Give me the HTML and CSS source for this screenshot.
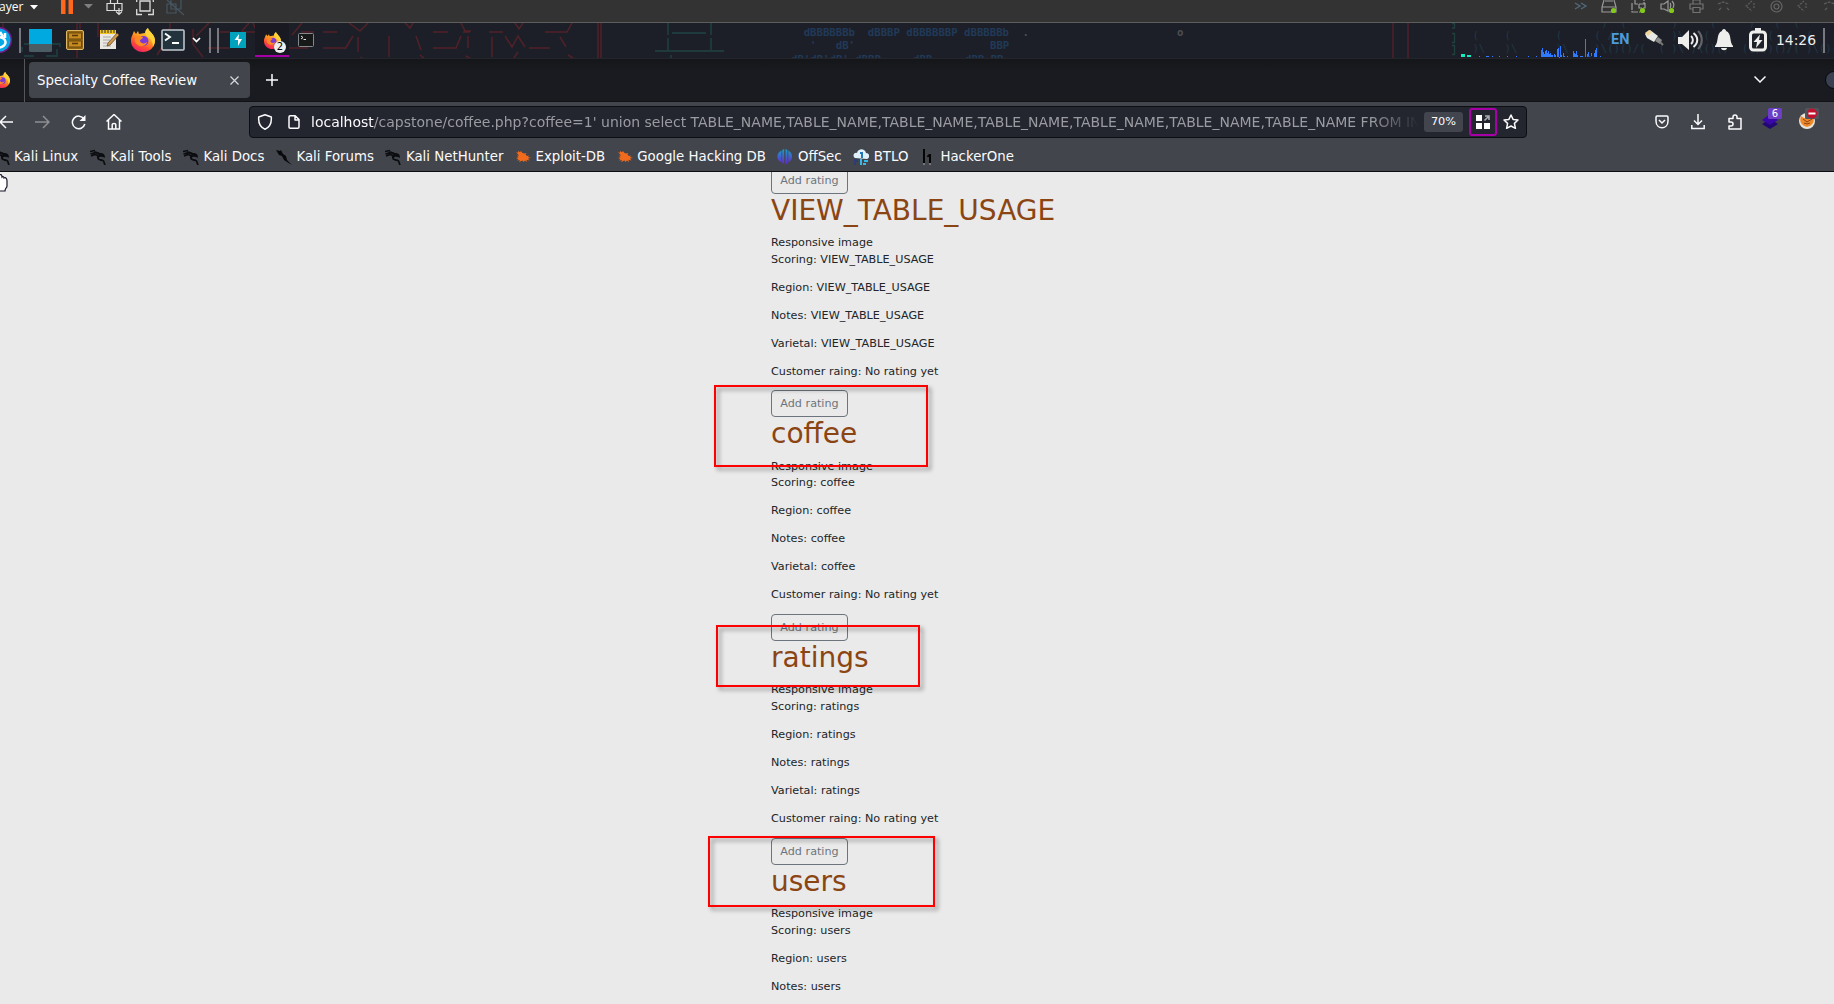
FILE: index.html
```html
<!DOCTYPE html>
<html lang="en">
<head>
<meta charset="utf-8">
<title>Specialty Coffee Review</title>
<link rel="stylesheet" href="styles.css">
</head>
<body>
<svg class="defs" width="0" height="0" aria-hidden="true">
  <defs>
    <linearGradient id="fire" x1="0.8" y1="0" x2="0.3" y2="1"><stop offset="0" stop-color="#ffe14a"/><stop offset=".45" stop-color="#ff9a1f"/><stop offset=".75" stop-color="#ff4a38"/><stop offset="1" stop-color="#f0206a"/></linearGradient>
    <linearGradient id="sec" gradientUnits="userSpaceOnUse" x1="0" y1="0" x2="0" y2="16"><stop offset="0" stop-color="#16a0c8"/><stop offset="1" stop-color="#6c1fd0"/></linearGradient>
    <symbol id="fox" viewBox="0 0 24 24"><path fill="url(#fire)" d="M1 8 3 3l2 3 2-3 1 3 6-1c0-2 1-4 3-5 0 3 6 5 7 12 0 7-5 12-12 12S0 19 0 13c0-2 0-3 1-5z"/><path fill="#ffd23a" d="M17 0c0 3 6 5 7 12 0 3-1 5-2 7 0-5-2-8-5-10-2-1-3-3-2-6z"/><circle cx="12.500" cy="13" r="5" fill="#7a3ad8"/><path fill="#ff8a24" d="M4 8c3-1 5 1 8 1 0 2-3 2-3 4 1 3 5 3 7 1-1 5-9 6-12 0z"/></symbol>
    <symbol id="dragon" viewBox="0 0 16 16"><path fill="none" stroke="#0c0d10" stroke-width="1.700" d="M0 2.500 5 1.500M.5 5 6 3.500 10 5M1 7 5 5.500 8 6.500c3-3 6-1 6 1-2-1-6-1-6 1.500s4 1 5.500 3L15 16M8 6.500C7 9 9 11 11.500 11.500"/><path fill="#0c0d10" d="m4 2 6 2 5 3-4-1-5-1.500z"/></symbol>
    <symbol id="bug" viewBox="0 0 16 14"><path fill="#f26a1b" d="m1 2 2 .8L3 1l2 1.300L6 1l1.500 2 2 .5 2-.5-1 1.500L12 6l2-.5L13 7l3 1-3 .5 1.500 2-3-.8.500 2.300-2-1.500-1.500 1.500-1-1.500L4 12l1-2-3 .5L3.500 9 1 8l2.500-.7L2 5.500h2z"/></symbol>
  </defs>
</svg>

<header class="vmbar">
  <span class="vm-label">ayer</span>
  <svg class="i-caret" width="8" height="5"><path d="M0 0h8L4 4.500z" fill="#fff"/></svg>
  <span class="vm-sep"></span>
  <svg class="i-pause" width="12" height="14"><path d="M0 0h4.500v14H0zM7.500 0H12v14H7.500z" fill="#ff671d"/></svg>
  <svg class="i-caret2" width="9" height="5"><path d="M0 0h9L4.500 4.500z" fill="#808080"/></svg>
  <svg class="i-send" width="19" height="22" fill="none" stroke="#dcdcdc" stroke-width="1.200"><path d="M4.500 0v3.500h7V0M1 3.500h15v7H1zM8.500 3.500v7M13 8v6M10 11.500l3 3 3-3"/></svg>
  <svg class="i-full" width="18" height="22" fill="none" stroke="#dcdcdc" stroke-width="1.300"><path d="M4 1h10v10H4zM.7 9v5.500H6M12 14.500h5.300V9M.7 0v2M17.300 0v2"/></svg>
  <svg class="i-unity" width="19" height="22" fill="none" stroke="#465663" stroke-width="1.200"><path d="M5 0v9h10V0M1 4h9v9H1zM1 0l17 15"/></svg>
  <div class="vm-devices">
    <svg width="14" height="22" fill="none" stroke="#53697b" stroke-width="1.300"><path d="m1 3 5 3-5 3M7 3l5 3-5 3"/></svg>
    <svg width="17" height="22" fill="none" stroke="#9a9a9a" stroke-width="1.200"><path d="m3 0-2 7v5h14V7l-2-7M1 7h14M4 1h8"/><circle cx="12.500" cy="10.500" r="2.600" fill="#83c91c" stroke="none"/></svg>
    <svg width="17" height="22" fill="none" stroke="#9a9a9a" stroke-width="1.200"><path d="M4 0v4h9V0M8 4v4h6V3M1 3v9h8" stroke-dasharray="7 1"/><circle cx="11.500" cy="10.500" r="2.600" fill="#83c91c" stroke="none"/></svg>
    <svg width="16" height="22" fill="none" stroke="#9a9a9a" stroke-width="1.200"><path d="M1 4h3l4-3v10L4 9H1zM10 3c1 1 1 4 0 5M12 1c2 2 2 5 1 7"/><circle cx="11.500" cy="10.500" r="2.600" fill="#83c91c" stroke="none"/></svg>
    <svg width="15" height="22" fill="none" stroke="#737373" stroke-width="1.200"><path d="M4 4V0h7v4M4 9H1V4h13v5h-3M4 7.500h7v5H4z"/></svg>
    <svg width="14" height="22" fill="none" stroke="#5f5f5f" stroke-width="1.200"><path d="m1 4 5-2 6 2M2 10l3-3M12 10 9 7" stroke-dasharray="3 1"/></svg>
    <svg width="14" height="22" fill="none" stroke="#5f5f5f" stroke-width="1.200"><path d="m8 1-6 5 6 5M10 3v6" stroke-dasharray="2 1"/></svg>
    <svg width="13" height="22" fill="none" stroke="#666" stroke-width="1.200"><circle cx="6.500" cy="6.500" r="5.500"/><circle cx="6.500" cy="6.500" r="2.500"/></svg>
    <svg width="14" height="22" fill="none" stroke="#5f5f5f" stroke-width="1.200"><path d="m8 1-6 5 6 5M10 3v6" stroke-dasharray="2 1"/></svg>
    <svg width="14" height="22" fill="none" stroke="#5f5f5f" stroke-width="1.200"><path d="m1 4 5-2 6 2M2 10l3-3" stroke-dasharray="3 1"/></svg>
  </div>
</header>

<div class="panel">
  <svg class="wallpaper" width="1834" height="35" aria-hidden="true">
    <g fill="none" stroke="#512128" stroke-width="1.500">
      <path d="M3 0v5M77 0v35M80 0v6M98 0v14M170 0v5l-8 9M162 24l-5 8M193 6v15l10 13M209 0l-13 13M220 9h10M208 25h22M241 9h18M249 0l-7 8M253 0l10 22M270 12v22M283 25h25M302 0l-10 12M301 9h13M323 9h14M323 25h22M345 26l8-13M349 0l11 8 8-8M358 14v15M362 34l-5 4M389 13v21M405 0l5 5 3-5M416 13l5 14M420 32l4 3M433 9h15M433 25h22M463 9h7M440 9h8M440 25h16l5-12M461 0l4 8h6M468 13v12M489 9h14M492 14v20M515 0l4 6 4-6M505 13l7 11 6-11 7 11M529 25h21M545 9h22l5-9M560 14l6 10M466 33l5 3M518 29l-4 6M568 32l5 3M598 0v35M601 0v35M1393 0v35M1408 0v35"/>
    </g>
    <g fill="none" stroke="#1f3a3c" stroke-width="1.800"><path d="M24 21h12M46 21h14v3M22 24v5M24 33h10M57 26v7H46M668 0v12M711 0v12M672 10h34M668 15v12M711 15v12M655 28h69M671 32v3"/></g>
    <g class="ascii blue">
      <text x="803.700" y="13">dBBBBBBb  dBBBP dBBBBBBP dBBBBBb</text>
      <text x="803.700" y="26"> '   dB'</text><text x="990" y="26">BBP</text>
      <text x="791" y="40">dB'dB'dB' dBBP</text><text x="913" y="40">dBP</text><text x="965" y="40">dBP BB</text>
    </g>
    <g class="ascii grey"><text x="1022.400" y="13">.</text><text x="1177" y="13">o</text></g>
    <g fill="none" stroke="#1f403c" stroke-width="1.300"><path d="M1452 .500h2.500V5H1452M1452 10.500h2.500v9H1452M1452 22.500h2.500v9H1452"/></g>
    <g class="ascii teal">
      <text x="1466" y="16"> (    (       (     ( /((   (   )\   (      ( /(     (   (  ( /( </text>
      <text x="1466" y="29"> )\   )\      )\    )\()()/(  ( )\ )\()()  (()()()/( )\()()/()\()</text>
      <text x="1601" y="4">)  (       )     (     )   (  (        )  )</text>
    </g>
    <path fill="#14ebc2" d="M1461 31h4v3h-4zM1467 32h4v2h-4z"/>
    <path fill="#2e7bff" d="M1479 33h1v1h-1zM1486 33h3v1h-3zM1492 33h1v1h-1zM1499 33h1v1h-1zM1507 33h1v1h-1zM1516 33h1v1h-1zM1528 33h1v1h-1zM1536 33h1v1h-1zM1541 34v-7h1v-2h1v4h1v2h1v-3h1v-1h1v3h1v-2h1v3h1v-1h1v2h2v2h1v-3h1v1h1v2h1v-8h1v-1h1v10h1v-12h1v9h1v2h1v-4h1v3h1v1h2v-1h1v1zM1573 34v-6h1v2h1v1h1v-3h1v4h1v2zM1580 33h3v1h-3zM1585 34V16h1v18zM1587 34v-3h1v-2h1v4h2v-3h1v3zM1594 34v-4h1v-3h1v-2h1v9zM1600 33h1v1h-1z"/>
  </svg>
  <div class="launchers">
    <svg class="kali-menu" width="14" height="34"><circle cx="-1" cy="17" r="13" fill="#751a86"/><circle cx="-1" cy="17" r="11.500" fill="#06a8e6"/><path d="M0 9l3 5M5 10v5M-2 14c9 0 11 9 0 11" stroke="#fff" stroke-width="2.500" fill="none"/></svg>
    <span class="bar b1"></span>
    <svg class="desktop" width="23" height="23"><rect width="23" height="23" rx="1.500" fill="#4c5c65"/><path d="M0 0h23v15H0z" fill="#00a9e0"/></svg>
    <svg class="drawer" width="18" height="20"><rect x=".5" y=".5" width="17" height="19" rx="1.500" fill="#93640f" stroke="#e0b765"/><path d="M2.500 3h13v6h-13zM2.500 11h13v6h-13z" fill="#c68a1e" stroke="#6c4a0c"/><path d="M6 5.500h6M6 13.500h6" stroke="#553908" stroke-width="1.500"/></svg>
    <svg class="notes" width="20" height="22"><path d="M1 2h16v18H1z" fill="#e9e7df"/><path d="M1 1h16v4H1z" fill="#f2c41d"/><path d="M3 0v4M6 0v4M9 0v4M12 0v4M15 0v4" stroke="#333"/><path d="M4 8h8M4 11h7M4 14h5M4 17h8" stroke="#aaa"/><path d="m9 14 9-10 2 2-9 10-3 1z" fill="#d0984d" stroke="#59401e" stroke-width=".7"/></svg>
    <svg class="ff" width="24" height="24"><use href="#fox"/></svg>
    <svg class="term" width="24" height="22"><rect x="1" y="1" width="22" height="20" rx="1" fill="#22333e" stroke="#c3cbd0" stroke-width="1.500"/><path d="m4 4.500 5 3.500-5 3.500M11 14h7" fill="none" stroke="#fff" stroke-width="1.900"/></svg>
    <svg class="more" width="9" height="6"><path d="m1 1 3.500 3.500L8 1" fill="none" stroke="#fff" stroke-width="1.700"/></svg>
    <span class="bar b2"></span><span class="bar b3"></span>
    <svg class="burp" width="16" height="16"><path d="M0 0h16v16H0z" fill="#00a3bd"/><path d="M9 2 4.500 8H8v6l4-7H8.500z" fill="#fff"/></svg>
    <div class="task"><svg width="17" height="17"><use href="#fox"/></svg><span class="count">2</span></div>
    <svg class="term2" width="16" height="14"><rect x=".5" y=".5" width="15" height="13" rx="1" fill="#171918" stroke="#85898a"/><path d="m3 3 2 1.500L3 6M5.500 6.500H8" fill="none" stroke="#ddd"/></svg>
  </div>
  <div class="tray">
    <span class="lang">EN</span>
    <svg class="plug" width="20" height="18"><path d="m1 5 5-4 8 6-4 6-7-4z" fill="#e8e8e4"/><path d="m1 4 4-3 3 2-4 4z" fill="#f1d795"/><path d="m11 12 3-4 4 3-2 4z" fill="#8a8a8a"/><path d="m16 13 3 3" stroke="#777" stroke-width="2"/></svg>
    <svg class="vol" width="26" height="20"><path d="M0 7h4l7-7v20l-7-6H0z" fill="#eeeeec"/><path d="M13 6c2.500 2 2.500 6 0 8M15.500 3c5 4 5 10 0 14" stroke="#eeeeec" fill="none" stroke-width="2"/><path d="M20 1c5 5 5 13 0 18" stroke="#626468" fill="none" stroke-width="2.200"/></svg>
    <svg class="bell" width="18" height="22" fill="#eeeeec"><path d="M9 0c1.300 0 2 1 2 2 6 2 3 11 7 15v1H0v-1C4 13 1 4 7 2c0-1 .7-2 2-2zM6 19h6c-.5 3-5.500 3-6 0z"/></svg>
    <svg class="batt" width="18" height="24"><path d="M6 0h6v4H6z" fill="#eeeeec"/><rect x="1.500" y="4" width="15" height="18" rx="3" fill="#1e2029" stroke="#eeeeec" stroke-width="3"/><path d="m11 6.500-6.500 7.500H8l-1 6 6.500-8H10z" fill="#eeeeec"/></svg>
    <time class="clock">14:26</time>
    <span class="bar b4"></span>
  </div>
</div>

<div class="tabs">
  <svg class="mini-fox" width="10" height="16" viewBox="6 0 10 16"><use href="#fox" width="16" height="16"/></svg>
  <div class="tab"><span>Specialty Coffee Review</span><svg width="9" height="9"><path d="m.5.5 8 8M8.500.5l-8 8" stroke="#d8d9dc" stroke-width="1.200"/></svg></div>
  <svg class="plus" width="12" height="12"><path d="M6 0v12M0 6h12" stroke="#fbfbfe" stroke-width="1.500"/></svg>
  <svg class="down" width="12" height="8"><path d="m.5.500 5.500 5.500L11.500.5" fill="none" stroke="#fbfbfe" stroke-width="1.500"/></svg>
  <svg class="knob" width="9" height="18"><circle cx="9" cy="9" r="8.500" fill="#394150" stroke="#08090c"/></svg>
</div>

<nav class="nav">
  <svg width="13" height="14" fill="none" stroke="#fbfbfe" stroke-width="1.500"><path d="M13 7H0M6 1 0 7l6 6"/></svg>
  <svg class="fwd" width="15" height="14" fill="none" stroke="#8d8f94" stroke-width="1.500"><path d="M0 7h14M8 1l6 6-6 6"/></svg>
  <svg class="reload" width="15" height="15" fill="none" stroke="#fbfbfe" stroke-width="1.500"><path d="M13 4A6.300 6.300 0 1 0 13.800 9"/><path d="M14.500 0v6H8.500z" fill="#fbfbfe" stroke="none"/></svg>
  <svg class="home" width="16" height="16" fill="none" stroke="#fbfbfe" stroke-width="1.500"><path d="m.5 7.500 7.500-7 7.500 7M2.500 6v9h11V6M6.200 15v-4.500q0-1 1.800-1t1.800 1V15"/></svg>
  <div class="url">
    <svg class="shield" width="16" height="16" fill="none" stroke="#fbfbfe" stroke-width="1.500"><path d="M8 .8 14.300 3c.5 6-1.300 10-6.300 12.200C3 13 1.200 9 1.700 3z" stroke-linejoin="round"/></svg>
    <svg class="doc" width="12" height="14" fill="none" stroke="#fbfbfe" stroke-width="1.500"><path d="M1 2Q1 .8 2.200.8h5L11 4.600V12q0 1.200-1.200 1.200H2.200Q1 13.200 1 12zM7 1v4h4" stroke-linejoin="round"/></svg>
    <span class="address"><b>localhost</b>/capstone/coffee.php?coffee=1' union select TABLE_NAME,TABLE_NAME,TABLE_NAME,TABLE_NAME,TABLE_NAME,TABLE_NAME,TABLE_NAME FROM INF</span>
    <span class="zoom">70%</span>
    <span class="grid"><svg width="14" height="14"><path d="M0 0h6v6H0zM0 8h6v6H0zM8 8h6v6H8z" fill="#fff"/><path d="M9 1h4v4M13 1 8.500 5.500" fill="none" stroke="#a8aab0" stroke-width="1.600"/></svg></span>
    <svg class="star" width="16" height="16" fill="none" stroke="#fbfbfe" stroke-width="1.500" stroke-linejoin="round"><path d="m8 1 2.100 4.400 4.900.6-3.600 3.400 1 4.900L8 12l-4.400 2.300 1-4.900L1 6l4.900-.6z"/></svg>
  </div>
  <div class="addons">
    <svg width="14" height="14" fill="none" stroke="#fbfbfe" stroke-width="1.500"><path d="M2 1h10q1 0 1 1.200V6c0 9-12 9-12 0V2.200Q1 1 2 1z"/><path d="m4 5 3 3 3-3"/></svg>
    <svg width="14" height="16" fill="none" stroke="#fbfbfe" stroke-width="1.500"><path d="M7 0v10M3 6.500l4 4 4-4M.8 11v3.500h12.400V11"/></svg>
    <svg width="14" height="16" fill="none" stroke="#fbfbfe" stroke-width="1.500"><path d="M1 6V4.500h4V3a2 2 0 0 1 4 0v1.500h4V15H1v-3h2a1.900 1.900 0 0 0 0-4H1z" stroke-linejoin="round"/></svg>
    <svg class="layers" width="21" height="22"><path d="m0 16 8-5 8 5-8 5z" fill="#220873"/><path d="m0 12 8-6 8 6-8 5z" fill="#3a08a8"/><rect x="6" width="14" height="11" rx="1.500" fill="#6c3fc5"/><text x="13" y="9" text-anchor="middle" class="badge">6</text></svg>
    <svg class="foxy" width="21" height="22"><circle cx="8" cy="13" r="8" fill="#e8e4dc"/><path d="m2 8 3 2h6l3-2c1 3 1 5 0 7-1 2-3 3-6 4-3-1-5-2-6-4-1-2-1-4 0-7z" fill="#ef8a2c"/><path d="m4 11 4 3 5-3M5 15l3 1 3-1" stroke="#8b4312" fill="none"/><rect x="6" width="14" height="11" rx="1.500" fill="#50545b"/><circle cx="13" cy="5.500" r="5" fill="#c4102f"/><path d="M9.500 5.500h7" stroke="#fff" stroke-width="2"/></svg>
  </div>
</nav>

<div class="bookmarks">
  <a><svg><use href="#dragon"/></svg>Kali Linux</a>
  <a><svg><use href="#dragon"/></svg>Kali Tools</a>
  <a><svg><use href="#dragon"/></svg>Kali Docs</a>
  <a><svg viewBox="0 0 16 16"><path d="m0 1 4 1 1-1 2 4 3 2 1 4 5 5-5-3-3-2-2-4-3-1z" fill="#08090b"/></svg>Kali Forums</a>
  <a><svg><use href="#dragon"/></svg>Kali NetHunter</a>
  <a><svg><use href="#bug"/></svg>Exploit-DB</a>
  <a><svg><use href="#bug"/></svg>Google Hacking DB</a>
  <a><svg viewBox="0 0 16 16"><path fill="url(#sec)" d="M4.500 1.500v12C-1 11-1 4 4.500 1.500zM5.200 1l2-1v15l-2-1zM8.500 0l2 1v13l-2 2zM11.300 1.500c5 2.500 5 9.500 0 12z"/></svg>OffSec</a>
  <a><svg viewBox="0 0 16 16"><path d="M2 9C-1 7 1 3 4 4c1-5 8-5 9 0 4 0 4 5 1 6z" fill="#dff1fb"/><path d="M7 3h3v6H8V5H7z" fill="#2578b8"/><path d="M7 10h2v6H7zM11 11h4v2h-4zM10 14h3v2h-3z" fill="#36b9e8"/><path d="M1 10h4v3H3v3H1z" fill="#303b72"/></svg>BTLO</a>
  <a><svg viewBox="0 0 16 16"><path d="M3 0h2v14H3zM7 7l2-2h2v9H9V8H7z" fill="#050506"/><path d="M3 15h2M9 15h2" stroke="#aaa"/></svg>HackerOne</a>
</div>

<main class="page">
  <section class="coffee">
    <div class="action"><button>Add rating</button></div>
    <h1>VIEW_TABLE_USAGE</h1>
    <div class="alt">Responsive image</div>
    <p>Scoring: VIEW_TABLE_USAGE</p><p>Region: VIEW_TABLE_USAGE</p><p>Notes: VIEW_TABLE_USAGE</p><p>Varietal: VIEW_TABLE_USAGE</p><p>Customer raing: No rating yet</p>
  </section>
  <section class="coffee">
    <div class="action"><button>Add rating</button></div>
    <h1>coffee</h1>
    <div class="alt">Responsive image</div>
    <p>Scoring: coffee</p><p>Region: coffee</p><p>Notes: coffee</p><p>Varietal: coffee</p><p>Customer raing: No rating yet</p>
  </section>
  <section class="coffee">
    <div class="action"><button>Add rating</button></div>
    <h1>ratings</h1>
    <div class="alt">Responsive image</div>
    <p>Scoring: ratings</p><p>Region: ratings</p><p>Notes: ratings</p><p>Varietal: ratings</p><p>Customer raing: No rating yet</p>
  </section>
  <section class="coffee">
    <div class="action"><button>Add rating</button></div>
    <h1>users</h1>
    <div class="alt">Responsive image</div>
    <p>Scoring: users</p><p>Region: users</p><p>Notes: users</p>
  </section>
</main>

<div class="mark mark-coffee"></div>
<div class="mark mark-ratings"></div>
<div class="mark mark-users"></div>
<svg class="cursor" width="8" height="18"><path d="M0 1c1-1 2 0 2 2 1-1 2 0 2 1 2-1 3 1 3 3v5c0 2-2 2-2 5H0" fill="#fff" stroke="#15172a" stroke-width="1.200"/></svg>
</body>
</html>
```
FILE: styles.css
```css
* { box-sizing: border-box; }
body {
  margin: 0; width: 1834px; height: 1004px; overflow: hidden; position: relative;
  display: flex; flex-direction: column;
  background: #eaeaea; color: #212529;
  font-family: "DejaVu Sans", sans-serif; font-size: 13.333px;
}
svg { display: block; flex: none; }
.defs { position: absolute; }

/* virtual machine toolbar */
.vmbar { height: 23px; flex: none; display: flex; background: #333; border-bottom: 1px solid #5d5d5d; font: 12px/14px "Open Sans", sans-serif; color: #fff; overflow: hidden; }
.vm-label { width: 21px; white-space: nowrap; margin-left: -1px; }
.i-caret { margin: 5px 0 0 10px; }
.vm-sep { width: 1px; height: 16px; background: #666; margin-left: 8px; }
.i-pause { margin-left: 15px; }
.i-caret2 { margin: 4px 0 0 11px; }
.i-send { margin-left: 13px; }
.i-full { margin-left: 11px; }
.i-unity { margin-left: 12px; }
.vm-devices { margin-left: 1390px; display: flex; justify-content: space-between; width: 262px; flex: none; }
.vm-devices svg { margin-left: -1px; }

/* desktop panel */
.panel { height: 35px; flex: none; display: flex; justify-content: space-between; position: relative; background: #1d1f28; overflow: hidden; }
.wallpaper { position: absolute; left: 0; top: 0; }
.ascii text { font: bold 10.66px "DejaVu Sans Mono", monospace; white-space: pre; }
.blue { fill: #203a58; }
.grey { fill: #4b4e54; }
.teal text { fill: #203845; font-weight: normal; }
.launchers, .tray { display: flex; align-items: center; height: 34px; position: relative; }
.bar { width: 2px; height: 25px; background: #77797e; }
.b1 { margin-left: 5px; }
.desktop { margin-left: 8px; }
.drawer { margin-left: 14px; }
.notes { margin-left: 15px; }
.ff { margin-left: 12px; }
.term { margin-left: 6px; }
.more { margin-left: 7px; }
.b2 { margin-left: 8px; }
.b3 { margin-left: 6px; }
.burp { margin-left: 11px; }
.task { width: 34px; height: 34px; margin-left: 9px; padding: 9px 0 0 9px; background: #191a21; border-bottom: 2px solid #a700a7; position: relative; }
.count { position: absolute; left: 19px; top: 18px; width: 12px; height: 12px; border-radius: 6px; background: #eee; color: #000; font-size: 10px; line-height: 12px; text-align: center; }
.term2 { margin-left: 9px; }
.lang { font: bold 14.5px/20px "Roboto", sans-serif; color: #4d9bd8; width: 18px; white-space: nowrap; }
.plug { margin-left: 15px; margin-top: -4px; }
.vol { margin-left: 14px; }
.bell { margin-left: 11px; }
.batt { margin-left: 16px; }
.clock { margin-left: 9px; font-size: 13.9px; color: #eee; width: 42px; white-space: nowrap; }
.b4 { margin: 0 9px 0 5px; }

/* browser tab strip */
.tabs { height: 44px; flex: none; display: flex; align-items: center; background: linear-gradient(#15161a, #1a1b20 30%); border-top: 1px solid #25262c; border-bottom: 1px solid #111216; }
.mini-fox { margin-right: 14px; }
.tabs .tab { width: 221px; height: 36px; margin-left: 5px; border-radius: 4px; background: #42454c; display: flex; align-items: center; justify-content: space-between; padding: 0 11px 0 8px; color: #fbfbfe; }
.tabs .tab::before { content: ""; width: 1px; height: 43px; background: #55565b; margin: 0 8px 0 -13px; }
.tabs .tab span { flex: 1; margin-left: 4px; white-space: nowrap; }
.plus { margin-left: 16px; }
.down { margin-left: auto; }
.knob { margin-left: 59px; }

/* navigation toolbar */
.nav { height: 40px; flex: none; display: flex; align-items: center; background: #42454c; }
.fwd { margin-left: 22px; }
.reload { margin-left: 21px; }
.home { margin-left: 20px; }
.url { width: 1278px; height: 32px; margin-left: 127px; border: 1px solid #0d0e13; border-radius: 4px; background: #23252f; display: flex; align-items: center; }
.shield { margin-left: 7px; }
.doc { margin-left: 15px; }
.address { width: 1108px; margin-left: 11px; overflow: hidden; white-space: nowrap; color: #9b9ca2; font-size: 14px; line-height: 20px; -webkit-mask-image: linear-gradient(to right, #000 1060px, transparent 1108px); mask-image: linear-gradient(to right, #000 1060px, transparent 1108px); }
.address b { font-weight: normal; color: #fbfbfe; }
.zoom { width: 39px; height: 20px; margin-left: 5px; border-radius: 3px; background: #42454e; color: #fbfbfe; font-size: 11.3px; line-height: 20px; text-align: center; }
.grid { width: 28px; height: 28px; margin-left: 6px; border: 2px solid #a700a7; border-radius: 3px; display: grid; place-items: center; }
.star { margin-left: 6px; }
.addons { margin-left: 128px; display: flex; align-items: center; gap: 22.3px; }
.layers { margin: -6px 0 0 -1.500px; }
.foxy { margin: -6px 0 0 -7px; }
.badge { font-size: 10px; fill: #fff; }

/* bookmarks toolbar */
.bookmarks { height: 30px; flex: none; display: flex; align-items: center; gap: 11.500px; background: #42454c; border-bottom: 1px solid #0c0d10; color: #fbfbfe; }
.bookmarks a { display: flex; align-items: center; gap: 4.500px; white-space: nowrap; }
.bookmarks a:first-child { margin-left: -6.500px; }
.bookmarks svg { width: 16px; height: 16px; }

/* page content */
.page { flex: 1; min-height: 0; overflow: hidden; padding-left: 771px; font-size: 11.2px; line-height: 16.8px; }
.coffee { height: 223.700px; }
.coffee:first-child { margin-top: -5.500px; }
.action { height: 27.300px; }
.action button { display: block; width: 77px; height: 27px; padding: 2px 0 0; border: 1px solid #6c757d; border-radius: 4px; background: transparent; color: #6c757d; font: inherit; }
h1 { margin: 0 0 7.500px; font-size: 28px; line-height: 33.600px; font-weight: normal; color: #8b4513; }
.coffee p { margin: 0 0 11.200px; }

/* highlight frames */
.mark { position: absolute; border: 2px solid #f00; filter: drop-shadow(3px 3px 2px rgba(0, 0, 0, .4)); }
.mark-coffee { left: 714px; top: 385px; width: 214px; height: 82px; }
.mark-ratings { left: 716px; top: 625px; width: 204px; height: 62px; }
.mark-users { left: 708px; top: 836px; width: 227px; height: 71px; }
.cursor { position: absolute; left: 0; top: 174px; }
```
